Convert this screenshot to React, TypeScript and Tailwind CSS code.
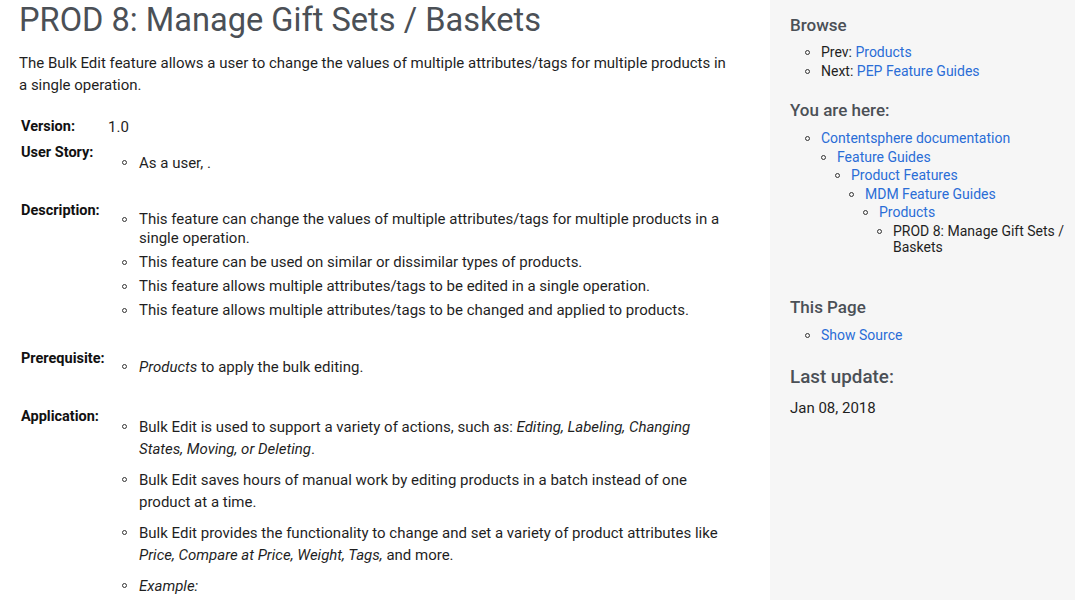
import React from "react";

function Li({ children, className = "" }: { children: React.ReactNode; className?: string }) {
  return (
    <li className={"relative " + className}>
      <span className="absolute left-[-17px] top-[8px] w-[5px] h-[5px] rounded-full border border-[#333]" />
      {children}
    </li>
  );
}

function SLi({ children, className = "" }: { children: React.ReactNode; className?: string }) {
  return (
    <li className={"relative " + className}>
      <span className="absolute left-[-16px] top-[6px] w-[5px] h-[5px] rounded-full border border-[#333]" />
      {children}
    </li>
  );
}

const A = ({ children }: { children: React.ReactNode }) => (
  <a className="text-[#2a6dd6] cursor-pointer">{children}</a>
);

const Label = ({ children }: { children: React.ReactNode }) => (
  <div className="w-[89px] shrink-0 pl-[2px] font-bold text-[14.5px] text-[#111]">{children}</div>
);

export default function App() {
  return (
    <div
      className="flex w-[1075px] h-[600px] overflow-hidden bg-white text-[#1f1f1f]"
      style={{ fontFamily: "Roboto, 'Noto Sans', sans-serif" }}
    >
      <main className="w-[770px] shrink-0 pl-[19px] pr-[39px]">
        <h1 className="pt-[1px] text-[32.6px] leading-[38px] text-[#4b5056] font-normal">
          PROD 8: Manage Gift Sets / Baskets
        </h1>
        <p className="mt-[13px] text-[15px] leading-[22px]">
          The Bulk Edit feature allows a user to change the values of multiple attributes/tags for multiple products in a
          single operation.
        </p>

        <div className="mt-[20px] text-[15px] leading-[22px]">
          <div className="flex">
            <Label>Version:</Label>
            <div>1.0</div>
          </div>

          <div className="flex mt-[4px]">
            <Label>User Story:</Label>
            <ul className="mt-[10px] pl-[31px]">
              <Li>As a user, .</Li>
            </ul>
          </div>

          <div className="flex mt-[26px]">
            <Label>Description:</Label>
            <ul className="mt-[10px] pl-[31px] leading-[19px]">
              <Li className="[&>span]:top-[7px]">
                This feature can change the values of multiple attributes/tags for multiple products in a single
                operation.
              </Li>
              <Li className="mt-[5px] [&>span]:top-[7px]">
                This feature can be used on similar or dissimilar types of products.
              </Li>
              <Li className="mt-[5px] [&>span]:top-[7px]">
                This feature allows multiple attributes/tags to be edited in a single operation.
              </Li>
              <Li className="mt-[5px] [&>span]:top-[7px]">
                This feature allows multiple attributes/tags to be changed and applied to products.
              </Li>
            </ul>
          </div>

          <div className="flex mt-[28px]">
            <Label>Prerequisite:</Label>
            <ul className="mt-[8px] pl-[31px]">
              <Li>
                <em>Products</em> to apply the bulk editing.
              </Li>
            </ul>
          </div>

          <div className="flex mt-[28px]">
            <Label>Application:</Label>
            <ul className="mt-[10px] pl-[31px]">
              <Li>
                Bulk Edit is used to support a variety of actions, such as:{" "}
                <em>Editing, Labeling, Changing States, Moving, or Deleting</em>.
              </Li>
              <Li className="mt-[9px]">
                Bulk Edit saves hours of manual work by editing products in a batch instead of one product at a time.
              </Li>
              <Li className="mt-[9px]">
                Bulk Edit provides the functionality to change and set a variety of product attributes like{" "}
                <em>Price, Compare at Price, Weight, Tags,</em> and more.
              </Li>
              <Li className="mt-[9px]">
                <em>Example:</em>
              </Li>
            </ul>
          </div>
        </div>
      </main>

      <aside className="flex-1 bg-[#f6f6f6] pl-[20px] pr-[10px] text-[14px] text-[#1f1f1f]">
        <h3 className="mt-[14px] text-[17px] leading-[22px] font-medium text-[#4b5056]">Browse</h3>
        <ul className="mt-[8px] pl-[31px] leading-[16px]">
          <SLi>
            Prev: <A>Products</A>
          </SLi>
          <SLi className="mt-[3px]">
            Next: <A>PEP Feature Guides</A>
          </SLi>
        </ul>

        <h3 className="mt-[20px] text-[17px] leading-[22px] font-medium text-[#4b5056]">You are here:</h3>
        <ul className="mt-[9px] pl-[31px] leading-[16px]">
          <SLi>
            <A>Contentsphere documentation</A>
            <ul className="pl-[16px]">
              <SLi className="mt-[2.6px]">
                <A>Feature Guides</A>
                <ul className="pl-[14px]">
                  <SLi className="mt-[2.6px]">
                    <A>Product Features</A>
                    <ul className="pl-[14px]">
                      <SLi className="mt-[2.6px]">
                        <A>MDM Feature Guides</A>
                        <ul className="pl-[14px]">
                          <SLi className="mt-[2.6px]">
                            <A>Products</A>
                            <ul className="pl-[14px]">
                              <SLi className="mt-[2.6px]">PROD 8: Manage Gift Sets / Baskets</SLi>
                            </ul>
                          </SLi>
                        </ul>
                      </SLi>
                    </ul>
                  </SLi>
                </ul>
              </SLi>
            </ul>
          </SLi>
        </ul>

        <h3 className="mt-[41px] text-[17px] leading-[22px] font-medium text-[#4b5056]">This Page</h3>
        <ul className="mt-[9px] pl-[31px] leading-[16px]">
          <SLi>
            <A>Show Source</A>
          </SLi>
        </ul>

        <h3 className="mt-[22px] text-[18.8px] leading-[24px] font-medium text-[#4b5056]">Last update:</h3>
        <p className="mt-[9px] text-[15px] leading-[20px]">Jan 08, 2018</p>
      </aside>
    </div>
  );
}
